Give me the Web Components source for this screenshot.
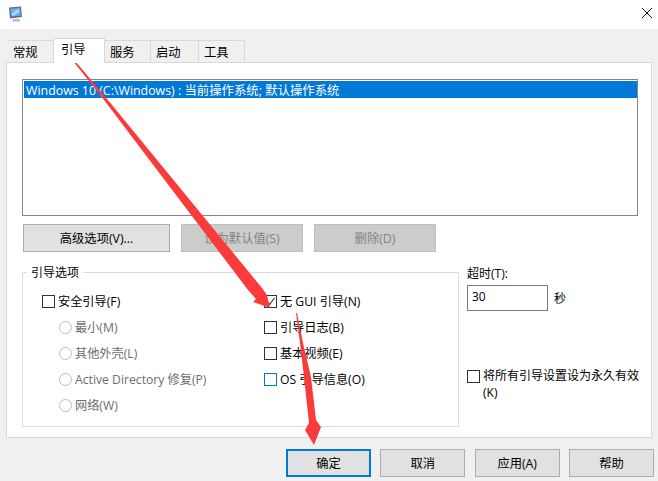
<!DOCTYPE html>
<html lang="zh">
<head>
<meta charset="utf-8">
<title>系统配置</title>
<style>
  html, body { margin: 0; padding: 0; }
  body {
    width: 658px;
    height: 481px;
    overflow: hidden;
    background: #f0f0f0;
    color: #000;
    font: 12px/16px "Open Sans", "Noto Sans CJK SC", sans-serif;
  }
</style>
</head>
<body>
<config-dialog></config-dialog>

<script>
const titleBarCss = `
  :host { display: flex; justify-content: space-between; height: 29px; background: #fff; }
  svg { display: block; margin: 6px 0 0 8px; }
  .close { margin: 8px 6px 0 0; }
`;

const tabsCss = `
  :host { display: flex; height: 24px; margin-left: 8px; align-items: flex-end; position: relative; z-index: 1; }
  span {
    box-sizing: border-box;
    height: 22px;
    border: 1px solid #d9d9d9;
    border-left-width: 0;
    border-bottom-width: 0;
    padding-left: 5px;
    line-height: 23px;
    font-size: 12.3px;
    background: #f0f0f0;
  }
  span:first-child { border-left-width: 1px; }
  span.on {
    height: 25px;
    margin-bottom: -1px;
    background: #fff;
    border-left-width: 1px;
    margin-left: -1px;
    padding-left: 7px;
    line-height: 21px;
  }
`;

const buttonCss = `
  :host { display: block; }
  button {
    display: block;
    box-sizing: border-box;
    width: 100%;
    height: 28px;
    padding: 2px 0 0;
    border: 1px solid #adadad;
    background: #e1e1e1;
    color: #000;
    font: inherit;
    font-size: 12.3px;
  }
  :host([disabled]) button { background: #ccc; border-color: #bfbfbf; color: #838383; }
  :host([primary]) button { border: 2px solid #0078d7; }
`;

const checkCss = `
  :host { display: flex; align-items: flex-start; height: 26px; }
  i {
    flex: none;
    box-sizing: border-box;
    width: 13px;
    height: 13px;
    margin: 6px 3px 0 0;
    border: 1px solid #333;
    background: #fff;
    display: block;
  }
  i svg { display: block; }
  span { line-height: 25px; font-size: 12.2px; white-space: nowrap; }
  :host([focus]) i { border-color: #0078d7; }
  :host([radio]) { margin-left: 17px; color: #6d6d6d; }
  :host([radio]) i { border-color: #bcbcbc; border-radius: 50%; }
  :host([wrap]) { height: auto; }
  :host([wrap]) span { flex: none; white-space: normal; line-height: 17px; font-size: 12px; width: 158px; }
  :host([wrap]) i { margin-top: 3px; }
`;

const groupCss = `
  :host {
    display: block;
    box-sizing: border-box;
    position: relative;
    width: 437px;
    height: 155px;
    border: 1px solid #dcdcdc;
    padding: 16px 0 0 19px;
  }
  .legend {
    position: absolute;
    left: 4px;
    top: -8px;
    padding: 0 4px;
    background: #fff;
    font-size: 12px;
  }
  .cols { display: grid; grid-template-columns: 222px 1fr; }
`;

const dialogCss = `
  :host { display: block; position: relative; width: 658px; height: 481px; }
  .page {
    box-sizing: border-box;
    width: 646px;
    height: 376px;
    margin: 0 0 0 6px;
    border: 1px solid #d9d9d9;
    background: #fff;
    padding: 16px 0 0 15px;
  }
  .list {
    box-sizing: border-box;
    width: 616px;
    height: 137px;
    border: 1px solid #828790;
    padding: 1px 0 0 1px;
  }
  .sel {
    height: 17px;
    background: #0078d7;
    color: #fff;
    padding-left: 2px;
    line-height: 19px;
    font-size: 12.38px;
    white-space: nowrap;
  }
  .actions { display: flex; gap: 11px; margin: 8px 0 0 1px; }
  .actions win-button:first-child { width: 147px; }
  .actions win-button { width: 122px; }
  .options { display: flex; gap: 8px; margin-top: 20px; }
  .side { width: 176px; font-size: 12px; }
  .side .label { margin-top: -7px; height: 20px; line-height: 18px; }
  .timeout { display: flex; align-items: center; gap: 6px; }
  .timeout span { padding-top: 2px; }
  .field {
    box-sizing: border-box;
    width: 81px;
    height: 26px;
    border: 1px solid #7a7a7a;
    padding-left: 4px;
    line-height: 22px;
  }
  .side check-box { margin-top: 56px; }
  .footer { display: flex; gap: 9.35px; margin: 11px 0 0 286px; }
  .footer win-button { width: 85px; }
  .arrows { position: absolute; left: 0; top: 0; pointer-events: none; }
`;

class TitleBar extends HTMLElement {
  constructor() {
    super();
    this.attachShadow({ mode: 'open' });
    this.shadowRoot.innerHTML = `<style>${titleBarCss}</style>
      <svg width="15" height="16" viewBox="0 0 15 16">
        <path d="M1 1.5 13 .5 14 11 2 12.5z" fill="#5b6d96"/>
        <path d="M2.500 2.700 12 2l.7 7.500-9.400 1z" fill="#6fb0e8"/>
        <path d="M4 8.500 10.500 3.500M5 9.500 11 5" stroke="#e8f4ff" stroke-width="1" fill="none"/>
        <path d="M5 13h6l1.500 2.500h-8.500z" fill="#b9bcc2"/>
      </svg>
      <svg class="close" width="10" height="10" viewBox="0 0 10 10">
        <path d="M0 0 10 10M10 0 0 10" stroke="#111" stroke-width="1" fill="none"/>
      </svg>`;
  }
}

class TabStrip extends HTMLElement {
  constructor() {
    super();
    this.attachShadow({ mode: 'open' });
    const widths = [46, 52, 46, 48, 46];
    const names = ['常规', '引导', '服务', '启动', '工具'];
    const tabs = names.map((n, i) =>
      `<span class="${i === 1 ? 'on' : ''}" style="width:${widths[i]}px">${n}</span>`).join('');
    this.shadowRoot.innerHTML = `<style>${tabsCss}</style>${tabs}`;
  }
}

class WinButton extends HTMLElement {
  constructor() {
    super();
    this.attachShadow({ mode: 'open' });
    this.shadowRoot.innerHTML = `<style>${buttonCss}</style><button><slot></slot></button>`;
  }
}

class CheckBox extends HTMLElement {
  constructor() {
    super();
    this.attachShadow({ mode: 'open' });
    const tick = this.hasAttribute('checked')
      ? '<svg width="11" height="11" viewBox="0 0 11 11"><path d="M2 6 4.500 8.500 9.500 2" stroke="#333" stroke-width="1.200" fill="none"/></svg>'
      : '';
    this.shadowRoot.innerHTML = `<style>${checkCss}</style><i>${tick}</i><span><slot></slot></span>`;
  }
}

class GroupBox extends HTMLElement {
  constructor() {
    super();
    this.attachShadow({ mode: 'open' });
    this.shadowRoot.innerHTML = `<style>${groupCss}</style>
      <div class="legend">${this.getAttribute('label')}</div>
      <div class="cols"><div><slot name="left"></slot></div><div><slot name="right"></slot></div></div>`;
  }
}

class ConfigDialog extends HTMLElement {
  constructor() {
    super();
    this.attachShadow({ mode: 'open' });
    this.shadowRoot.innerHTML = `<style>${dialogCss}</style>
      <title-bar></title-bar>
      <div style="height:9px"></div>
      <tab-strip></tab-strip>
      <div class="page">
        <div class="list"><div class="sel">Windows 10 (C:\\Windows) : 当前操作系统; 默认操作系统</div></div>
        <div class="actions">
          <win-button>高级选项(V)...</win-button>
          <win-button disabled>设为默认值(S)</win-button>
          <win-button disabled>删除(D)</win-button>
        </div>
        <div class="options">
          <group-box label="引导选项">
            <div slot="left">
              <check-box>安全引导(F)</check-box>
              <check-box radio>最小(M)</check-box>
              <check-box radio>其他外壳(L)</check-box>
              <check-box radio>Active Directory 修复(P)</check-box>
              <check-box radio>网络(W)</check-box>
            </div>
            <div slot="right">
              <check-box checked>无 GUI 引导(N)</check-box>
              <check-box>引导日志(B)</check-box>
              <check-box>基本视频(E)</check-box>
              <check-box focus>OS 引导信息(O)</check-box>
            </div>
          </group-box>
          <div class="side">
            <div class="label">超时(T):</div>
            <div class="timeout"><div class="field">30</div><span>秒</span></div>
            <check-box wrap>将所有引导设置设为永久有效(K)</check-box>
          </div>
        </div>
      </div>
      <div class="footer">
        <win-button primary>确定</win-button>
        <win-button>取消</win-button>
        <win-button>应用(A)</win-button>
        <win-button>帮助</win-button>
      </div>
      <svg class="arrows" width="658" height="481" viewBox="0 0 658 481">
        <path d="M70 55 103 94 262 288 267 295 270 308 253 302 256 299 248 290 101 96 69 56z" fill="#f93b3b"/>
        <path d="M297 313 303 343 311 377 316 420 321 427 314 445 305 430 309 423 304 377 300 343 296 313z" fill="#f93b3b"/>
      </svg>`;
  }
}

customElements.define('title-bar', TitleBar);
customElements.define('tab-strip', TabStrip);
customElements.define('win-button', WinButton);
customElements.define('check-box', CheckBox);
customElements.define('group-box', GroupBox);
customElements.define('config-dialog', ConfigDialog);
</script>
</body>
</html>
